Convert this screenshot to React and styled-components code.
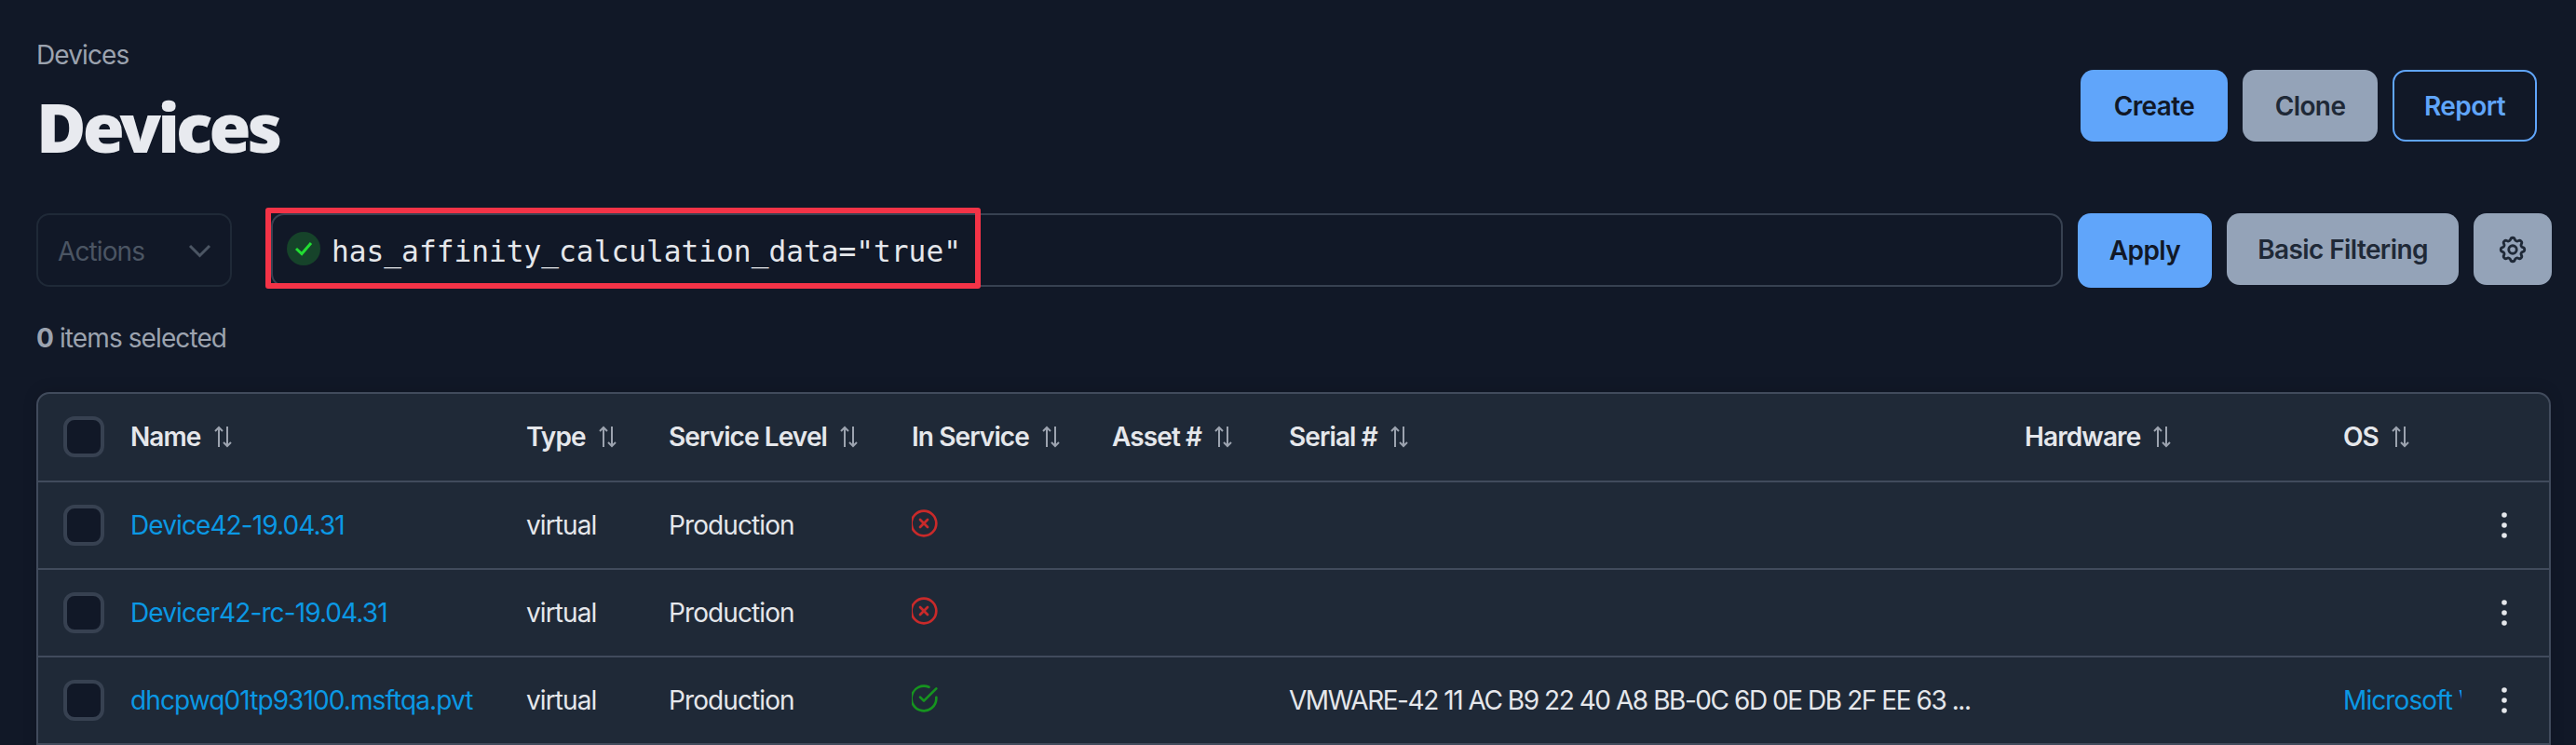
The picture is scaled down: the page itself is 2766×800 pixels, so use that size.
import React from "react";
import styled, { createGlobalStyle } from "styled-components";
import { FiCheckCircle, FiXCircle } from "react-icons/fi";
import { HiOutlineCog } from "react-icons/hi";

const GlobalStyle = createGlobalStyle`
	html, body {
		margin: 0;
		height: 800px;
		overflow: hidden;
		background-color: #111827;
	}
	* {
		box-sizing: border-box;
	}
`;

const Page = styled.div`
	font-family: Inter, "Liberation Sans", sans-serif;
	font-size: 28px;
	letter-spacing: -0.9px;
	color: #e5e7eb;
	padding: 0 27px 0 39px;
`;

const PageHeader = styled.div`
	display: flex;
	justify-content: space-between;
	height: 229px;
`;

const Breadcrumb = styled.div`
	line-height: 36px;
	padding-top: 41px;
	color: #9ca3af;
`;

const Title = styled.h1`
	font-family: "Noto Sans", sans-serif;
	font-size: 73px;
	font-weight: 900;
	line-height: 80px;
	letter-spacing: -3.9px;
	margin: 0;
	padding-top: 19px;
	color: #e8eaef;
`;

const TopButtons = styled.div`
	display: flex;
	gap: 16px;
	padding: 75px 15px 0 0;
`;

const Button = styled.button`
	font-family: inherit;
	font-size: 28px;
	font-weight: 600;
	letter-spacing: -0.6px;
	height: ${({ tall }) => (tall ? "80px" : "77px")};
	width: ${({ w }) => w}px;
	padding: 0;
	border-radius: 14px;
	display: flex;
	align-items: center;
	justify-content: center;
	cursor: pointer;
	flex-shrink: 0;
	border: ${({ kind }) => (kind === "outline" ? "2px solid #60a5fa" : "none")};
	color: ${({ kind }) =>
		kind === "primary" ? "#111827" : kind === "outline" ? "#60a5fa" : "#1f2937"};
	background-color: ${({ kind }) =>
		kind === "primary" ? "#60a5fa" : kind === "outline" ? "transparent" : "#94a3b8"};
`;

const FilterRow = styled.div`
	display: flex;
	align-items: flex-start;
	height: 80px;
	margin-right: -1px;
`;

const ActionsSelect = styled.div`
	width: 210px;
	height: 79px;
	flex-shrink: 0;
	display: flex;
	align-items: center;
	justify-content: space-between;
	padding: 2px 20px 0 21px;
	margin-right: 42px;
	border: 2px solid #1f2937;
	border-radius: 14px;
	color: #4b5563;
`;

const QueryBox = styled.div`
	position: relative;
	flex: 1;
	height: 79px;
	display: flex;
	align-items: center;
	gap: 12px;
	padding-left: 15px;
	margin-right: 16px;
	border: 2px solid #374151;
	border-radius: 14px;
`;

const Highlight = styled.div`
	position: absolute;
	left: -8px;
	top: -8px;
	width: 768px;
	height: 87px;
	border: 6px solid #f43347;
	border-radius: 3px;
`;

const ValidBadge = styled.span`
	width: 36px;
	height: 36px;
	border-radius: 50%;
	background-color: #16432a;
	display: flex;
	align-items: center;
	justify-content: center;
	margin-top: -3px;
`;

const QueryText = styled.span`
	font-family: "DejaVu Sans Mono", monospace;
	font-size: 31.2px;
	letter-spacing: 0;
	padding-top: 2px;
	color: #e5e7eb;
`;

const FilterButtons = styled.div`
	display: flex;
	gap: 16px;
	align-items: flex-start;
`;

const Selected = styled.div`
	color: #9ca3af;
	line-height: 36px;
	margin-top: 36px;
	height: 76px;
	b {
		font-weight: 700;
	}
`;

const Card = styled.div`
	background-color: #1f2937;
	border: 2px solid #414b5c;
	border-radius: 14px;
	overflow: hidden;
	box-shadow: 0 -2px 16px rgba(0, 0, 0, 0.12);
`;

const Table = styled.table`
	width: 100%;
	table-layout: fixed;
	border-collapse: collapse;
`;

const Col = styled.col`
	width: ${({ w }) => (w ? `${w}px` : "auto")};
`;

const HeadCell = styled.th`
	height: 94px;
	padding: 0 0 2px;
	text-align: left;
	font-weight: 600;
	white-space: nowrap;
	color: #e5e7eb;
	border-bottom: 2px solid #414b5c;
`;

const Cell = styled.td`
	height: 94px;
	padding: 0;
	white-space: nowrap;
	overflow: hidden;
	color: #e5e7eb;
	border-bottom: 2px solid #414b5c;
`;

const CheckCell = styled.div`
	display: flex;
	align-items: center;
	padding-left: 27px;
`;

const Checkbox = styled.input`
	appearance: none;
	margin: 0;
	width: 44px;
	height: 44px;
	background-color: #111827;
	border: 4px solid #374151;
	border-radius: 12px;
`;

const Link = styled.a`
	color: #0b98e4;
	text-decoration: none;
`;

const SerialText = styled.span`
	letter-spacing: -1.45px;
`;

const HeadLabel = styled.span`
	display: inline-flex;
	align-items: center;
	gap: 14px;
`;

const Status = styled.span`
	display: flex;
	margin: -4px 0 0 -3px;
	color: ${({ ok }) => (ok ? "#16941f" : "#c92a2a")};
`;

const RowMenu = styled.span`
	display: flex;
	justify-content: center;
	margin-left: -2px;
	color: #e5e7eb;
`;

const SortIcon = () => (
	<svg width="19" height="24" viewBox="0 0 19 24" fill="none" stroke="#9ca3af" strokeWidth="2">
		<path d="M5 23V2M1 6l4-4 4 4" />
		<path d="M14 1v21M10 18l4 4 4-4" />
	</svg>
);

const DotsIcon = () => (
	<svg width="6" height="28" viewBox="0 0 6 28" fill="currentColor">
		<circle cx="3" cy="3" r="2.8" />
		<circle cx="3" cy="14" r="2.8" />
		<circle cx="3" cy="25" r="2.8" />
	</svg>
);

const ChevronIcon = () => (
	<svg width="25" height="15" viewBox="0 0 25 15" fill="none" stroke="currentColor" strokeWidth="3">
		<path d="M2 2l10.5 10.5L23 2" />
	</svg>
);

const columns = ["Name", "Type", "Service Level", "In Service", "Asset #", "Serial #", "Hardware", "OS"];
const widths = [99, 425, 153, 261, 215, 190, 790, 342, 127, null];

const devices = [
	{ name: "Device42-19.04.31", ok: false },
	{ name: "Devicer42-rc-19.04.31", ok: false },
	{
		name: "dhcpwq01tp93100.msftqa.pvt",
		ok: true,
		serial: "VMWARE-42 11 AC B9 22 40 A8 BB-0C 6D 0E DB 2F EE 63 ...",
		os: "Microsoft Windows Server",
	},
];

export default function App() {
	return (
		<Page>
			<GlobalStyle />
			<PageHeader>
				<div>
					<Breadcrumb>Devices</Breadcrumb>
					<Title>Devices</Title>
				</div>
				<TopButtons>
					<Button kind="primary" w={158}>Create</Button>
					<Button kind="muted" w={145}>Clone</Button>
					<Button kind="outline" w={155}>Report</Button>
				</TopButtons>
			</PageHeader>

			<FilterRow>
				<ActionsSelect>
					<span>Actions</span>
					<ChevronIcon />
				</ActionsSelect>
				<QueryBox>
					<ValidBadge>
						<svg width="20" height="16" viewBox="0 0 20 16" fill="none" stroke="#22dd33" strokeWidth="3">
							<path d="M2 8l6 5.5L18 2" />
						</svg>
					</ValidBadge>
					<QueryText>has_affinity_calculation_data="true"</QueryText>
					<Highlight />
				</QueryBox>
				<FilterButtons>
					<Button kind="primary" tall w={144}>Apply</Button>
					<Button kind="muted" w={249}>Basic Filtering</Button>
					<Button kind="muted" w={84} aria-label="Settings">
						<HiOutlineCog size={34} />
					</Button>
				</FilterButtons>
			</FilterRow>

			<Selected><b>0</b> items selected</Selected>

			<Card>
				<Table>
					<colgroup>
						{widths.map((w, i) => (
							<Col key={i} w={w} />
						))}
					</colgroup>
					<thead>
						<tr>
							<HeadCell>
								<CheckCell><Checkbox type="checkbox" readOnly /></CheckCell>
							</HeadCell>
							{columns.map((c) => (
								<HeadCell key={c}>
									<HeadLabel>{c}<SortIcon /></HeadLabel>
								</HeadCell>
							))}
							<HeadCell />
						</tr>
					</thead>
					<tbody>
						{devices.map((d) => (
							<tr key={d.name}>
								<Cell>
									<CheckCell><Checkbox type="checkbox" readOnly /></CheckCell>
								</Cell>
								<Cell><Link>{d.name}</Link></Cell>
								<Cell>virtual</Cell>
								<Cell>Production</Cell>
								<Cell>
									<Status ok={d.ok}>
										{d.ok ? <FiCheckCircle size={32} /> : <FiXCircle size={32} />}
									</Status>
								</Cell>
								<Cell />
								<Cell><SerialText>{d.serial}</SerialText></Cell>
								<Cell />
								<Cell>{d.os && <Link>{d.os}</Link>}</Cell>
								<Cell>
									<RowMenu><DotsIcon /></RowMenu>
								</Cell>
							</tr>
						))}
						<tr>
							<Cell colSpan={10} />
						</tr>
					</tbody>
				</Table>
			</Card>
		</Page>
	);
}
